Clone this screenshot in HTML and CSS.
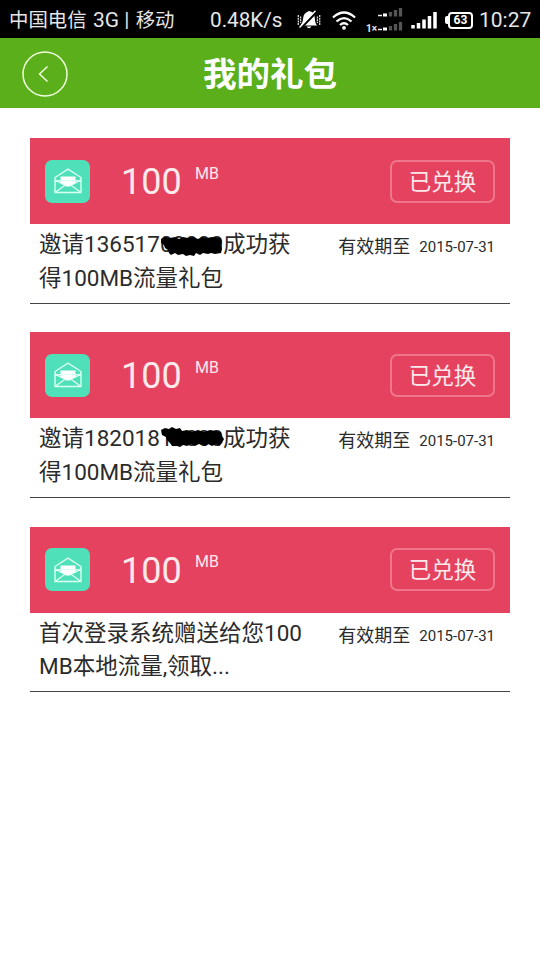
FILE: index.html
```
<!DOCTYPE html>
<html lang="zh-CN">
<head>
<meta charset="utf-8">
<title>我的礼包</title>
<link rel="stylesheet" href="styles.css">
</head>
<body>
<svg width="0" height="0" class="defs">
  <defs>
    <symbol id="mail" viewBox="0 0 28 26">
      <path d="M1 9.5 14 1.2 27 9.5V24.5H1Z M1 12 11 17 M27 12 17 17 M1 24.5 11 17.2Q14 19 17 17.2L27 24.5" fill="none" stroke="#d8fff2" stroke-width="1.4" stroke-linejoin="round"/>
      <path d="M6.500 8.5H21.5V14.5L17 17.3Q14 18.7 11 17.3L6.500 14.5Z" fill="#fff"/>
      <path d="M3.5 12.5H24.5" stroke="#d8fff2" stroke-width="1"/>
    </symbol>
  </defs>
</svg>
<div class="status">
  <span class="carrier">中国电信 <span class="net">3G |</span> 移动</span>
  <span class="speed">0.48K/s</span>
  <svg class="bell" viewBox="0 0 24 20" width="24" height="20">
    <path d="M12 1Q17.5 1.5 17.8 8T20.5 15.5H3.5Q6 13 6.2 8T12 1ZM9.5 16.5H14.5Q12 20 9.5 16.5Z" fill="#fff"/>
    <path d="M3.6 18.500 20.500 1" stroke="#000" stroke-width="2.400"/>
    <path d="M2.500 17.500 18.500 0.800" stroke="#fff" stroke-width="1.4"/>
    <path d="M1.3 5V15M3.6 6.5V13M20.4 6.5V13M22.7 5V15" stroke="#ddd" stroke-width="1.3" stroke-dasharray="2 .7"/>
  </svg>
  <svg class="wifi" viewBox="0 0 24 19" width="24" height="19">
    <path d="M1 6.5Q12-3.5 23 6.5M4.5 10.5Q12 3.8 19.5 10.5M8 14Q12 10.5 16 14" fill="none" stroke="#fff" stroke-width="2.3"/>
    <circle cx="12" cy="16.8" r="1.9" fill="#fff"/>
  </svg>
  <span class="onex">1×</span>
  <svg class="dual" viewBox="0 0 26 24" width="26" height="24">
    <path d="M1 7.5H5M1 21.5H5" stroke="#eee" stroke-width="1.6"/>
    <path d="M6 7H10M6 21H10" stroke="#fff" stroke-width="3"/>
    <path d="M13.5 8.5V4M18.500 8.500V2M23.500 8.500V0M13.500 22.500V18M18.500 22.500V16M23.500 22.500V14" stroke="#555" stroke-width="3.300"/>
  </svg>
  <svg class="bars" viewBox="0 0 26 18" width="26" height="18">
    <path d="M2 17.500V14M7.500 17.500V12M13 17.500V8.500M18.500 17.500V5M24 17.500V1" stroke="#fff" stroke-width="3.500"/>
  </svg>
  <span class="battery"><i class="cap"></i><b class="charge">63</b></span>
  <span class="clock">10:27</span>
</div>
<header class="head">
  <svg class="back" viewBox="0 0 46 46" width="46" height="46" fill="none" stroke="#efffdc">
    <circle cx="23" cy="23" r="22" stroke-width="1.500"/>
    <path d="M25.500 15.500 17.500 23 25.500 30.500" stroke-width="1.500"/>
  </svg>
  <h1 class="title">我的礼包</h1>
</header>
<main class="list">
  <section class="card">
    <div class="band">
      <div class="icon"><svg width="28" height="26"><use href="#mail"/></svg></div>
      <span class="num">100</span><span class="unit">MB</span>
      <span class="btn">已兑换</span>
    </div>
    <div class="info">
      <p class="desc">邀请136517<span class="mask">00000<svg class="ink" viewBox="0 0 64 24" width="64" height="24"><path d="M1 6 5 4 10 5 15 4 19 6 23 4 28 5 33 4 38 6 42 4 47 5 52 4 61 5 62 9 61 12 62 16 61 20 55 21 51 20 48 21 43 20 40 22 36 20 34 23 30 22 26 23 23 21 18 22 15 20 11 22 9 20 8 17 5 15 4 12 1 10Z"/></svg></span>成功获<br>得100MB流量礼包</p>
      <div class="date">有效期至<span class="day">2015-07-31</span></div>
    </div>
  </section>
  <section class="card">
    <div class="band">
      <div class="icon"><svg width="28" height="26"><use href="#mail"/></svg></div>
      <span class="num">100</span><span class="unit">MB</span>
      <span class="btn">已兑换</span>
    </div>
    <div class="info">
      <p class="desc">邀请182018<span class="mask">10000<svg class="ink" viewBox="0 0 64 24" width="64" height="24"><path d="M1 3 5 1 9 2 12 0 16 2 20 1 22 4 27 3 32 5 38 3 44 5 50 3 56 4 61 5 62 9 64 12 62 16 59 19 56 17 52 19 48 17 45 19 39 17 35 19 31 17 27 19 23 18 20 20 17 19 12 19 10 16 7 13 6 10 2 8Z"/></svg></span>成功获<br>得100MB流量礼包</p>
      <div class="date">有效期至<span class="day">2015-07-31</span></div>
    </div>
  </section>
  <section class="card">
    <div class="band">
      <div class="icon"><svg width="28" height="26"><use href="#mail"/></svg></div>
      <span class="num">100</span><span class="unit">MB</span>
      <span class="btn">已兑换</span>
    </div>
    <div class="info">
      <p class="desc">首次登录系统赠送给您100<br>MB本地流量,领取...</p>
      <div class="date">有效期至<span class="day">2015-07-31</span></div>
    </div>
  </section>
</main>
</body>
</html>
```
FILE: styles.css
```
* { box-sizing: border-box; }
body { margin: 0; width: 540px; height: 960px; background: #fff; overflow: hidden; font-family: Roboto, "Noto Sans CJK SC", sans-serif; color: #2b2b2b; }
.defs { position: absolute; }
.status { height: 38px; background: #000; color: #e6e6e6; display: flex; align-items: center; padding: 2px 0 0 9px; font-size: 20px; line-height: 36px; white-space: nowrap; }
.status svg, .status > span { flex: none; }
.carrier { width: 201px; font-size: 19.4px; }
.net { font-size: 21px; margin: 0 1.5px; }
.speed { width: 87px; font-size: 20.7px; }
.bell { margin-right: 11px; }
.wifi { margin-right: 10px; }
.onex { width: 11px; font-size: 10px; font-weight: 700; line-height: 12px; margin-top: 17px; }
.dual { margin: 0 8px 0 0; }
.bars { margin-right: 8px; }
.battery { display: flex; align-items: center; width: 28px; margin-right: 6px; }
.cap { width: 3px; height: 8px; background: #fff; border-radius: 2px 0 0 2px; }
.charge { width: 25px; height: 17px; border: 2px solid #fff; border-radius: 4px; font-size: 12px; line-height: 13px; text-align: center; color: #fff; }
.clock { font-size: 21px; }
.head { height: 70px; background: #5aaf1b; display: grid; grid-template-columns: 68px 1fr 68px; align-items: center; }
.back { margin-left: 22px; margin-top: 2px; }
.title { margin: 0; padding-top: 4px; text-align: center; color: #fff; font-size: 33.5px; line-height: 40px; font-weight: 700; }
.list { padding: 30px 30px 0; }
.card { height: 165.600px; border-bottom: 1px solid #444; margin-bottom: 28.700px; }
.band { height: 86px; background: #e4425f; display: flex; align-items: center; padding: 0 15px; color: #fbe9ec; }
.icon { width: 45px; height: 43px; border-radius: 7px; background: #50e0b9; display: flex; align-items: center; justify-content: center; }
.num { margin-left: 31px; width: 74px; padding-top: 2px; font-size: 36px; line-height: 44px; }
.unit { font-size: 16px; line-height: 20px; margin-bottom: 15px; }
.btn { margin-left: auto; width: 105px; height: 43px; border: 2px solid #f0768c; border-radius: 7px; font-size: 22.500px; line-height: 40px; text-align: center; }
.info { display: flex; justify-content: space-between; padding: 4px 15px 0 9px; }
.desc { margin: 0; font-size: 22.500px; line-height: 33.500px; white-space: nowrap; }
.mask { position: relative; }
.ink { position: absolute; left: 0; top: 2px; fill: #000; }
.date { display: flex; font-size: 18px; line-height: 38px; white-space: nowrap; }
.day { margin-left: 9px; font-size: 15px; }
```
